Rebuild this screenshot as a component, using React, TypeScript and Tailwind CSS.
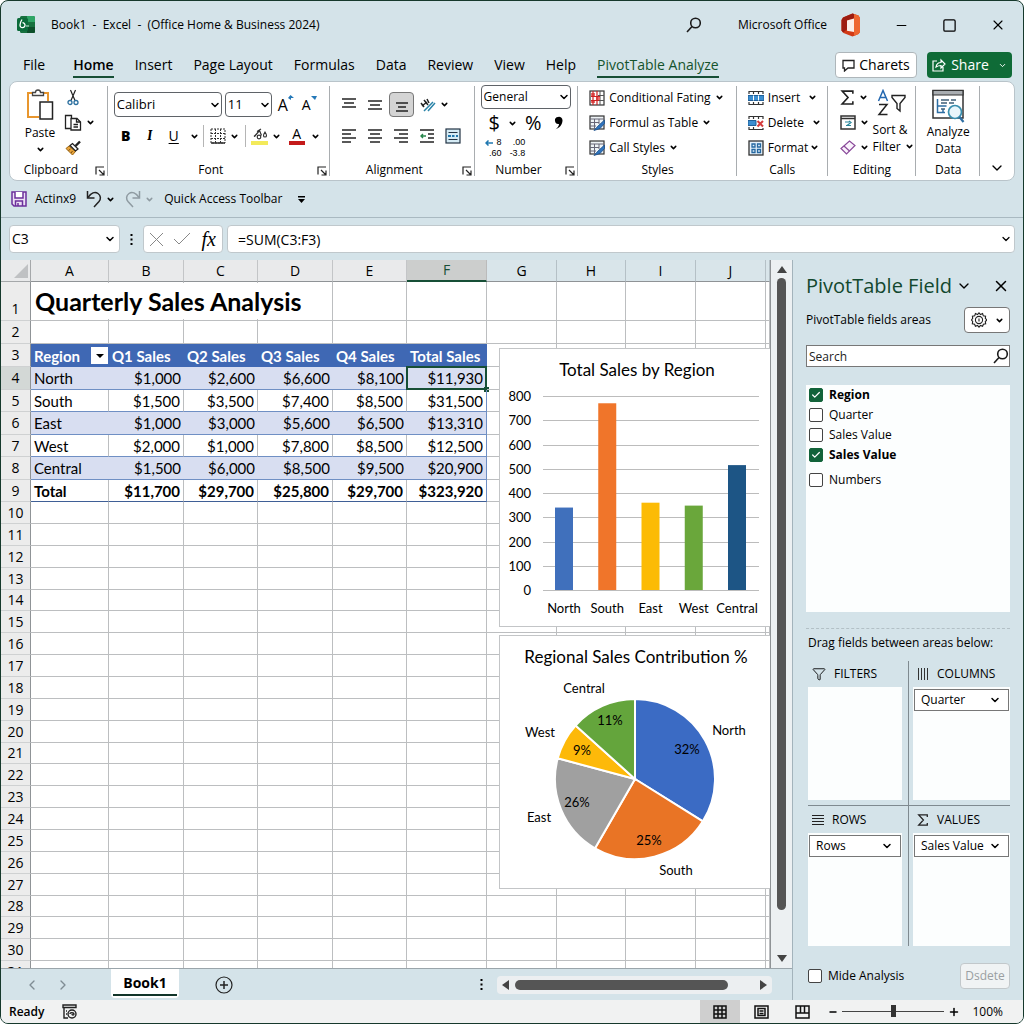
import { useState, type ReactNode } from "react";
import { Check, ChevronDown, ChevronLeft, ChevronRight, Funnel, Minus, Plus, Square, X } from "lucide-react";

const TABS = ["File", "Home", "Insert", "Page Layout", "Formulas", "Data", "Review", "View", "Help", "PivotTable Analyze"];

const COLUMNS = [
  { name: "A", width: "w-[78px]" },
  { name: "B", width: "w-[75px]" },
  { name: "C", width: "w-[74px]" },
  { name: "D", width: "w-[75px]" },
  { name: "E", width: "w-[74px]" },
  { name: "F", width: "w-[80px]" },
  { name: "G", width: "w-[70px]" },
  { name: "H", width: "w-[69px]" },
  { name: "I", width: "w-[70px]" },
  { name: "J", width: "w-[70px]" },
  { name: "", width: "" },
];

const HEADERS = ["Region", "Q1 Sales", "Q2 Sales", "Q3 Sales", "Q4 Sales", "Total Sales"];

const DATA = [
  ["North", "$1,000", "$2,600", "$6,600", "$8,100", "$11,930"],
  ["South", "$1,500", "$3,500", "$7,400", "$8,500", "$31,500"],
  ["East", "$1,000", "$3,000", "$5,600", "$6,500", "$13,310"],
  ["West", "$2,000", "$1,000", "$7,800", "$8,500", "$12,500"],
  ["Central", "$1,500", "$6,000", "$8,500", "$9,500", "$20,900"],
  ["Total", "$11,700", "$29,700", "$25,800", "$29,700", "$323,920"],
];

const ROW_COUNT = 31;

function rowHeight(row: number) {
  if (row === 1) return 39;
  if (row <= 9) return [5, 7, 9].includes(row) ? 22 : 23;
  return row % 7 === 0 ? 21 : 22;
}

const BARS = [
  { label: "North", value: 340, color: "#4070bc" },
  { label: "South", value: 770, color: "#f0752a" },
  { label: "East", value: 360, color: "#fcbb05" },
  { label: "West", value: 348, color: "#6aa73b" },
  { label: "Central", value: 515, color: "#1d5585" },
];

const SLICES = [
  { label: "North", pct: "32%", from: 0, to: 122, color: "#3b6bc4", lx: 229, ly: 99, px: 187, py: 118 },
  { label: "South", pct: "25%", from: 122, to: 210, color: "#e97425", lx: 176, ly: 239, px: 149, py: 209 },
  { label: "East", pct: "26%", from: 210, to: 285, color: "#a0a0a0", lx: 39, ly: 186, px: 77, py: 171 },
  { label: "West", pct: "9%", from: 285, to: 312, color: "#fdb909", lx: 40, ly: 101, px: 82, py: 119 },
  { label: "Central", pct: "11%", from: 312, to: 360, color: "#64a53c", lx: 84, ly: 57, px: 110, py: 89 },
];

const FIELDS = [
  { name: "Region", checked: true, gap: false },
  { name: "Quarter", checked: false, gap: false },
  { name: "Sales Value", checked: false, gap: false },
  { name: "Sales Value", checked: true, gap: false },
  { name: "Numbers", checked: false, gap: true },
];

/* ---------- shared bits ---------- */

function Caret({ className = "" }: { className?: string }) {
  return <ChevronDown className={`size-[9px] shrink-0 ${className}`} strokeWidth={4} />;
}

function Pick({ label, value, className, caret = "right-1" }: { label: string; value: string; className: string; caret?: string }) {
  return (
    <div className="relative">
      <select aria-label={label} className={`block appearance-none border bg-white text-black outline-none ${className}`}>
        <option>{value}</option>
      </select>
      <ChevronDown className={`pointer-events-none absolute top-1/2 size-3 -translate-y-1/2 ${caret}`} strokeWidth={3} />
    </div>
  );
}

function IconButton({ label, className = "", children }: { label: string; className?: string; children: ReactNode }) {
  return (
    <button aria-label={label} className={`flex shrink-0 items-center justify-center ${className}`}>
      {children}
    </button>
  );
}

function Group({ label, launcher = false, children }: { label: string; launcher?: boolean; children: ReactNode }) {
  return (
    <section className="relative flex min-w-0 flex-col">
      <div className="h-[79px] pt-[3px]">{children}</div>
      <div className={`flex h-[18px] items-center justify-center text-xs ${launcher ? "pr-4" : ""}`}>{label}</div>
      {launcher && (
        <button aria-label={`${label} settings`} className="absolute right-[3px] bottom-1">
          <svg width="10" height="10" viewBox="0 0 10 10" fill="none" stroke="#222">
            <path d="M1 8.500V1h8M4 4l4.500 4.500M9 4.500V9H4.500" strokeWidth="1.200" />
          </svg>
        </button>
      )}
      <div className="absolute top-1 right-0 bottom-1 w-px bg-[#a9adb0]" />
    </section>
  );
}

function Lines({ rows }: { rows: number[][] }) {
  return (
    <svg width="16" height="16" viewBox="0 0 16 16" stroke="#222" strokeWidth="1.4">
      {rows.map(([x1, x2, y]) => <path key={y} d={`M${x1} ${y}H${x2}`} />)}
    </svg>
  );
}

/* ---------- icons ---------- */

function ExcelLogo() {
  return (
    <svg width="18" height="18" viewBox="0 0 18 18">
      <rect x="3" y="0" width="15" height="17" rx="1.500" fill="#17713f" />
      <path d="M10 0h6.500A1.500 1.500 0 0 1 18 1.500V6h-8z" fill="#2ea566" />
      <path d="M10 11h8v4.500a1.500 1.500 0 0 1-1.500 1.500H10z" fill="#0c4f2a" />
      <rect x="0" y="2" width="11" height="13" rx="1.500" fill="#0b6b3a" />
      <path d="M5 3.500c-1 1.500-2 3-2 5.500a2.500 2.500 0 1 0 2.500-2.300" fill="none" stroke="#fff" strokeWidth="1.300" />
      <path d="M9 10h3" stroke="#cfeedd" />
    </svg>
  );
}

function OfficeLogo() {
  return (
    <svg width="20" height="24" viewBox="0 0 20 24">
      <path d="M11.500 .5 2 4.500 .5 7v10.500L2.500 20l9 3.500 6-2.500 1.500-2V5l-1.500-2.500z" fill="#d23a16" />
      <path d="M11.500 .5 13 1v4.500L6 7.500v9L2 19.500.5 17.500V7L2 4.500z" fill="#9d1c10" />
      <path d="M13 1l4.500 1.500L19 5v14l-1.500 2-4.500 2z" fill="#ee6630" />
      <path d="M6 7.500 13 5.500v13.500l-7-1.200z" fill="#fbeee9" />
    </svg>
  );
}

function SearchIcon() {
  return (
    <svg width="16" height="16" viewBox="0 0 16 16" fill="none" stroke="#1b1b1b" strokeWidth="1.600">
      <circle cx="9.500" cy="6" r="4.800" />
      <path d="M6 9.500 1 15" />
    </svg>
  );
}

function GearIcon() {
  return (
    <svg width="16" height="16" viewBox="0 0 16 16" fill="none" stroke="#222" strokeWidth="1.100">
      <path d="M8 .8l1.500 1.700 2.100-.9.700 2.200 2.300.3-.3 2.300L16 8l-1.700 1.500.4 2.300-2.300.4-.8 2.100-2.100-.8L8 15.200l-1.500-1.700-2.100.8-.8-2.100-2.300-.4.400-2.300L0.500 8l1.200-1.600-.3-2.300 2.300-.3.700-2.200 2.100.9z" />
      <circle cx="8" cy="8" r="3.600" />
      <path d="M8 6.500v3" />
    </svg>
  );
}

function PasteIcon() {
  return (
    <svg width="28" height="32" viewBox="0 0 28 32" fill="none">
      <path d="M7 4H2v24H13M17 4h5v8" stroke="#e8962e" strokeWidth="2" />
      <path d="M6.500 6.500V3.500h3a2.500 2.500 0 0 1 5 0h3v3z" fill="#fff" stroke="#444" strokeWidth="1.300" />
      <rect x="14" y="13" width="12.500" height="17" fill="#fff" stroke="#222" strokeWidth="1.500" />
    </svg>
  );
}

function CutIcon() {
  return (
    <svg width="14" height="17" viewBox="0 0 14 17" fill="none">
      <path d="M4.500 1l4.500 10.500M9.500 1 5 11.500" stroke="#222" strokeWidth="1.200" />
      <circle cx="4" cy="13.500" r="2" stroke="#2b6f9f" strokeWidth="1.300" />
      <circle cx="10" cy="13.500" r="2" stroke="#2b6f9f" strokeWidth="1.300" />
    </svg>
  );
}

function CopyIcon() {
  return (
    <svg width="18" height="17" viewBox="0 0 18 17" fill="none" stroke="#222" strokeWidth="1.300">
      <path d="M7 14.500H1.500v-13H7.500v3" />
      <path d="M7 4.500h6l3.500 3.500v8H7z" fill="#fff" />
      <path d="M12.500 4.500V8h4M9.500 10.500h4.500M9.500 13h4.500" />
    </svg>
  );
}

function BrushIcon() {
  return (
    <svg width="17" height="16" viewBox="0 0 17 16" fill="none">
      <path d="M4 6 1 8.500l6.500 6.500 3-3.500z" fill="#e8a33a" stroke="#9a6410" />
      <path d="M3.500 10.500l2-1.500M6 13l1.500-2" stroke="#7a4d0c" />
      <path d="M5 5.500 10.500 11l2.500-2L7.500 3.500z" fill="#fff" stroke="#222" strokeWidth="1.300" />
      <path d="M10.500 6l4.500-4.500" stroke="#222" strokeWidth="2.400" />
    </svg>
  );
}

function BordersIcon() {
  return (
    <svg width="16" height="16" viewBox="0 0 16 16" fill="none" stroke="#333">
      <path d="M1 1h14v14H1zM1 5.500h14M1 10.500h14M5.500 1v14M10.500 1v14" strokeDasharray="2 1" />
      <path d="M1 15h14" strokeWidth="1.600" />
    </svg>
  );
}

function FillIcon() {
  return (
    <svg width="17" height="18" viewBox="0 0 17 18" fill="none">
      <path d="M3.500 9.500l5-6 2 5M3 9.500l3-3M6 4.500l4-2.500" stroke="#333" strokeWidth="1.200" />
      <circle cx="8" cy="10" r="1.800" stroke="#333" strokeWidth="1.200" />
      <path d="M14 5c2 3 2 5 0 5s-2-2 0-5z" stroke="#333" strokeWidth="1.100" />
      <rect y="14" width="17" height="4" fill="#f3ea5a" />
    </svg>
  );
}

function OrientIcon() {
  return (
    <svg width="16" height="16" viewBox="0 0 16 16" fill="none">
      <path d="M1 6l3 4M4 3l4 5M2 9l5-4M7 2l2 4" stroke="#222" strokeWidth="1.500" />
      <path d="M4 14l9-9M8 14l7-8" stroke="#2a83a8" strokeWidth="1.500" />
    </svg>
  );
}

function IndentIcon() {
  return (
    <svg width="16" height="16" viewBox="0 0 16 16" fill="none" stroke="#222" strokeWidth="1.400">
      <path d="M1 2h14M9 6h6M9 10h6M1 14h14" />
      <path d="M7 8H2M4 6 2 8l2 2" stroke="#27864b" />
    </svg>
  );
}

function WrapIcon() {
  return (
    <svg width="16" height="16" viewBox="0 0 16 16" fill="none" stroke="#234" strokeWidth="1.200">
      <rect x="1" y="1" width="14" height="14" fill="#d5ebf5" />
      <path d="M3.500 4.500h9M3.500 11.500h9" />
      <path d="M3 8h3M7 8h2.500M11 8h2" stroke="#2178ad" strokeWidth="2" />
    </svg>
  );
}

function ConditionalIcon() {
  return (
    <svg width="16" height="16" viewBox="0 0 16 16" fill="none">
      <rect x="1" y="1" width="14" height="14" fill="#fff" stroke="#333" strokeWidth="1.200" />
      <path d="M9 5.500h6M9 10.500h6M11 1v14" stroke="#555" />
      <path d="M2 3h4v3H2zM7 7h4v3H7zM2 10h4v3H2z" fill="#e86a6a" />
      <path d="M4 1v14M8 1v14M2 6.500h9M2 10.500h8" stroke="#c22" strokeWidth="1.200" />
    </svg>
  );
}

function TableBrushIcon() {
  return (
    <svg width="16" height="16" viewBox="0 0 16 16" fill="none">
      <rect x="1" y="1" width="14" height="13" fill="#eef3f6" stroke="#333" strokeWidth="1.200" />
      <path d="M1 4h14M1 7.500h9M1 11h6M5.500 4v10M10 4v5" stroke="#667" />
      <path d="M15.500 5 9 11l-4 4.500 6-2 4.500-5z" fill="#2f74bd" stroke="#1b4f8a" strokeWidth=".8" />
    </svg>
  );
}

function InsertIcon() {
  return (
    <svg width="16" height="16" viewBox="0 0 16 16" fill="none" stroke="#333">
      <path d="M1 4V1.500h14V4M1 12v2.500h14V12M5.500 1.500V4M10.500 1.500V4M5.500 12v2.500M10.500 12v2.500" strokeWidth="1.200" />
      <path d="M0 5.500h16v5H0z" fill="#3b8ed0" stroke="#1f5f98" />
      <path d="M5.500 5.500v5M10.500 5.500v5" stroke="#fff" />
    </svg>
  );
}

function DeleteIcon() {
  return (
    <svg width="16" height="16" viewBox="0 0 16 16" fill="none" stroke="#333">
      <path d="M1 4V1.500h14V4M1 12v2.500h14V13M5.500 1.500V4M10.500 1.500V4M5.500 12v2.500" strokeWidth="1.200" />
      <path d="M0 5.500h8v5H0z" fill="#3b8ed0" stroke="#1f5f98" />
      <path d="M9.500 6 15 11.500M15 6 9.500 11.500" stroke="#d43c3c" strokeWidth="2" />
    </svg>
  );
}

function FormatIcon() {
  return (
    <svg width="16" height="16" viewBox="0 0 16 16" fill="none">
      <rect x="1" y="1" width="14" height="14" fill="#e5f1fa" stroke="#333" strokeWidth="1.300" />
      <path d="M4 4h3v3H4zM9.500 4h3v3h-3zM4 9.500h3v3H4zM9.500 9.500h3v3h-3z" stroke="#2567a0" strokeWidth="1.300" />
    </svg>
  );
}

function SigmaIcon({ size = 15 }: { size?: number }) {
  return (
    <svg width={size} height={size} viewBox="0 0 14 14" fill="none" stroke="#222" strokeWidth="1.500">
      <path d="M12 3.500V1H2l5.500 6L2 13h10v-2.500" />
    </svg>
  );
}

function FillDownIcon() {
  return (
    <svg width="16" height="15" viewBox="0 0 16 15" fill="none">
      <path d="M1 1h14v13H1zM1 3.500h14" stroke="#333" strokeWidth="1.500" />
      <path d="M5 7h5M6 10.500h5M9 6l2 1.500-4 3" stroke="#27869b" strokeWidth="1.200" />
    </svg>
  );
}

function EraserIcon() {
  return (
    <svg width="16" height="15" viewBox="0 0 16 15" fill="none" stroke="#8a4a9a" strokeWidth="1.200">
      <path d="M1 8.500 9.500 1l5.500 4.500L6.500 14z" fill="#fbf3fd" />
      <path d="M4 6l5.500 5" />
    </svg>
  );
}

function SortIcon() {
  return (
    <svg width="30" height="28" viewBox="0 0 30 28" fill="none">
      <path d="M1.500 12 6 1.500 10.500 12M3 8.500h6" stroke="#2468b0" strokeWidth="1.500" />
      <path d="M2 15.500h8L2 25.500h8.500" stroke="#222" strokeWidth="1.500" />
      <path d="M15 6.500h13v2L23 14.500V22l-3-2.500v-5L15 8.500z" stroke="#222" strokeWidth="1.400" />
    </svg>
  );
}

function AnalyzeIcon() {
  return (
    <svg width="34" height="34" viewBox="0 0 34 34" fill="none">
      <path d="M2 1.500h30V29H2z" fill="#fff" stroke="#333" strokeWidth="1.500" />
      <path d="M2 1.500h30V6H2z" fill="#a9adb1" stroke="#333" strokeWidth="1.200" />
      <path d="M6.500 10v13.500H14M6.500 17h9M12 23v-3" stroke="#2d6ea3" strokeWidth="1.500" />
      <path d="M10 11h8M20 11h5M10 14h6M18 14h5M10 20h4" stroke="#3f5f78" strokeWidth="1.300" />
      <circle cx="24" cy="23" r="6.500" fill="#e9f6fb" stroke="#3a8fae" strokeWidth="1.700" />
      <path d="M28.500 28l4 5" stroke="#2d6ea3" strokeWidth="2.200" />
    </svg>
  );
}

function SaveIcon() {
  return (
    <svg width="16" height="16" viewBox="0 0 16 16" fill="none" stroke="#6b2f9b" strokeWidth="1.500">
      <path d="M1 1h14v14H3l-2-2z" fill="#ecdff5" />
      <path d="M4 1v6h8V1" fill="#fff" />
      <path d="M4.500 15v-5h7v5M7 12v3" />
    </svg>
  );
}

function UndoIcon({ flip = false, color = "#222" }: { flip?: boolean; color?: string }) {
  return (
    <svg width="16" height="18" viewBox="0 0 16 18" fill="none" stroke={color} strokeWidth="1.500" className={flip ? "-scale-x-100" : ""}>
      <path d="M1.500 1v7h7" />
      <path d="M2 7.500C5 3 9 1.500 12 3.500c3 2 3 5.500 1 8L8 17" />
    </svg>
  );
}

/* ---------- ribbon ---------- */

function MenuRow({ icon, text, caret = "ml-1" }: { icon: ReactNode; text: string; caret?: string }) {
  return (
    <button className="flex h-[25px] items-center whitespace-nowrap text-xs">
      <span className="mr-1 shrink-0">{icon}</span>
      {text}
      <Caret className={caret} />
    </button>
  );
}

function Ribbon() {
  return (
    <div className="mx-2 grid h-[100px] shrink-0 grid-cols-[98fr_223fr_145fr_104fr_159fr_91fr_89fr_64fr_34fr] rounded-lg border border-[#b9c4ca] bg-white">
      <Group label="Clipboard" launcher>
        <div className="flex h-full gap-[6px] pl-3">
          <button className="flex w-9 flex-col items-center pt-1 text-xs">
            <PasteIcon />
            <span className="mt-1">Paste</span>
            <Caret className="mt-1" />
          </button>
          <div className="flex flex-col">
            <IconButton label="Cut" className="h-[25px] w-[18px]"><CutIcon /></IconButton>
            <div className="flex items-center gap-1">
              <IconButton label="Copy" className="h-[25px] w-[18px]"><CopyIcon /></IconButton>
              <Caret />
            </div>
            <IconButton label="Format painter" className="h-[25px] w-[18px]"><BrushIcon /></IconButton>
          </div>
        </div>
      </Group>

      <Group label="Font" launcher>
        <div className="flex items-center gap-[3px] pt-[7px] pl-[6px]">
          <Pick label="Font name" value="Calibri" className="h-[25px] w-[108px] rounded border-[#5f6368] pl-[2px] text-[13px]" caret="right-[1px]" />
          <Pick label="Font size" value="11" className="h-[25px] w-[47px] rounded border-[#5f6368] pl-[2px] text-[13px]" caret="right-[1px]" />
          <button aria-label="Grow font" className="ml-[3px] flex text-base leading-5">A<svg width="6" height="6" viewBox="0 0 6 6" fill="#2478b8"><path d="M0 3 2.500 0 6 3H3v2z" /></svg></button>
          <button aria-label="Shrink font" className="ml-[5px] flex text-sm leading-5">A<svg width="6" height="6" viewBox="0 0 6 6" fill="#2478b8"><path d="M0 1h6L4 5z" /></svg></button>
        </div>
        <div className="flex h-[38px] items-center pl-[10px] text-sm">
          <button className="w-4 font-extrabold">B</button>
          <button className="ml-2 w-4 font-serif font-semibold italic">I</button>
          <button className="ml-2 w-4 underline underline-offset-2">U</button>
          <Caret className="ml-2" />
          <span className="mx-1 h-[22px] w-px bg-[#b5b5b5]" />
          <IconButton label="Borders" className="ml-[2px]"><BordersIcon /></IconButton>
          <Caret className="ml-1" />
          <span className="mr-[5px] ml-[6px] h-[22px] w-px bg-[#b5b5b5]" />
          <IconButton label="Fill colour"><FillIcon /></IconButton>
          <Caret className="mr-2 ml-1" />
          <button aria-label="Font colour" className="flex w-4 flex-col items-center border-b-4 border-[#c41a1a] text-sm leading-[14px]">A</button>
          <Caret className="ml-[6px]" />
        </div>
      </Group>

      <Group label="Alignment" launcher>
        <div className="flex h-8 items-center gap-[10px] pt-[7px] pl-[11px]">
          <IconButton label="Top align"><Lines rows={[[1, 15, 2], [3, 13, 6], [1, 15, 10]]} /></IconButton>
          <IconButton label="Middle align"><Lines rows={[[1, 15, 4], [3, 13, 8], [1, 15, 12]]} /></IconButton>
          <IconButton label="Bottom align" className="-mx-1 size-[25px] rounded border border-[#777] bg-[#d4d4d4]"><Lines rows={[[2, 14, 6], [4, 12, 10], [2, 14, 14]]} /></IconButton>
          <IconButton label="Orientation" className="gap-1"><OrientIcon /><Caret /></IconButton>
        </div>
        <div className="flex h-[38px] items-center gap-[10px] pl-[11px]">
          <IconButton label="Align left"><Lines rows={[[1, 15, 2], [1, 10, 6], [1, 15, 10], [1, 10, 14]]} /></IconButton>
          <IconButton label="Centre"><Lines rows={[[1, 15, 2], [3, 13, 6], [1, 15, 10], [3, 13, 14]]} /></IconButton>
          <IconButton label="Align right"><Lines rows={[[1, 15, 2], [6, 15, 6], [1, 15, 10], [6, 15, 14]]} /></IconButton>
          <IconButton label="Decrease indent"><IndentIcon /></IconButton>
          <IconButton label="Wrap text"><WrapIcon /></IconButton>
        </div>
      </Group>

      <Group label="Number" launcher>
        <div className="pr-[7px] pl-[6px]">
          <Pick label="Number format" value="General" className="h-6 w-full rounded border-[#5f6368] pl-[2px] text-xs" caret="right-[1px]" />
          <div className="flex h-7 items-center pl-2 text-xl leading-7">
            <button>$</button>
            <Caret className="mr-2 ml-2" />
            <button>%</button>
            <button aria-label="Comma style" className="ml-3">
              <svg width="9" height="14" viewBox="0 0 9 14"><path d="M4 1a3.500 3.500 0 0 1 4.500 3.500C8.500 9 5 12 1.500 13.500 4 11.500 5 9.500 5 8A3.500 3.500 0 1 1 4 1z" /></svg>
            </button>
          </div>
          <div className="flex gap-2 pl-1 font-['Liberation_Sans',sans-serif] text-[9px] leading-[11px]">
            <button className="flex flex-col items-end">
              <span className="flex items-center gap-1">
                <svg width="8" height="6" fill="none" stroke="#2078b0" strokeWidth="1.500"><path d="M8 3H1M3.500 .5 1 3l2.500 2.500" /></svg>
                8
              </span>
              <span>.60</span>
            </button>
            <button className="flex flex-col items-end">
              <span>.00</span>
              <span>-3.8</span>
            </button>
          </div>
        </div>
      </Group>

      <Group label="Styles">
        <div className="flex flex-col items-start pl-[11px]">
          <MenuRow icon={<ConditionalIcon />} text="Conditional Fating" />
          <MenuRow icon={<TableBrushIcon />} text="Formul as Table" />
          <MenuRow icon={<TableBrushIcon />} text="Call Styles" />
        </div>
      </Group>

      <Group label="Calls">
        <div className="flex flex-col items-start pl-[11px]">
          <MenuRow icon={<InsertIcon />} text="Insert" caret="ml-2" />
          <MenuRow icon={<DeleteIcon />} text="Delete" caret="ml-2" />
          <MenuRow icon={<FormatIcon />} text="Format" caret="ml-[2px]" />
        </div>
      </Group>

      <Group label="Editing">
        <div className="flex gap-1 pl-3">
          <div className="flex flex-col">
            {[
              { label: "Sum", icon: <SigmaIcon /> },
              { label: "Fill", icon: <FillDownIcon /> },
              { label: "Clear", icon: <EraserIcon /> },
            ].map((b) => (
              <IconButton key={b.label} label={b.label} className="h-[25px] gap-1">{b.icon}<Caret /></IconButton>
            ))}
          </div>
          <button className="flex flex-col items-start pt-1 text-xs leading-[17px] whitespace-nowrap">
            <span className="ml-1"><SortIcon /></span>
            <span className="mt-1">Sort &amp;</span>
            <span className="flex items-center gap-1">Filter <Caret /></span>
          </button>
        </div>
      </Group>

      <Group label="Data">
        <button className="flex w-full flex-col items-center pt-1 text-xs leading-[17px]">
          <AnalyzeIcon />
          <span>Analyze</span>
          <span>Data</span>
        </button>
      </Group>

      <div className="flex items-end justify-center pb-1">
        <IconButton label="Collapse ribbon"><ChevronDown className="size-4" /></IconButton>
      </div>
    </div>
  );
}

/* ---------- sheet ---------- */

function BarChart() {
  const y = (v: number) => 241 - v * 0.2425;
  return (
    <svg width="271" height="277" className="block" fontSize="13" fill="#000">
      <text x="137" y="27" fontSize="17" textAnchor="middle">Total Sales by Region</text>
      {[800, 700, 600, 500, 400, 300, 200, 100, 0].map((v) => (
        <g key={v}>
          <path d={`M43 ${Math.round(y(v)) + 0.5}H259`} stroke="#bcbcbc" />
          <text x="31" y={y(v) + 5} textAnchor="end">{v}</text>
        </g>
      ))}
      {BARS.map((b, i) => (
        <g key={b.label}>
          <rect x={55 + i * 43.25} y={y(b.value)} width="18" height={241 - y(b.value)} fill={b.color} />
          <text x={64 + i * 43.25} y="264" textAnchor="middle">{b.label}</text>
        </g>
      ))}
    </svg>
  );
}

function PieChart() {
  const point = (deg: number) => {
    const a = (deg * Math.PI) / 180;
    return `${135 + 80 * Math.sin(a)} ${143 - 80 * Math.cos(a)}`;
  };
  return (
    <svg width="271" height="252" className="block" fontSize="13" fill="#000" textAnchor="middle">
      <text x="136" y="27" fontSize="17">Regional Sales Contribution %</text>
      {SLICES.map((s) => (
        <path key={s.label} d={`M135 143L${point(s.from)}A80 80 0 0 1 ${point(s.to)}Z`} fill={s.color} stroke="#fff" strokeWidth="2" />
      ))}
      {SLICES.map((s) => (
        <g key={s.label}>
          <text x={s.lx} y={s.ly}>{s.label}</text>
          <text x={s.px} y={s.py}>{s.pct}</text>
        </g>
      ))}
    </svg>
  );
}

function cellClass(row: number, col: number) {
  if (row < 3 || row > 9 || col > 5) return "border-r border-b border-[#bcbec0]";
  if (row === 3) return "bg-[#3f68b4] font-bold text-white";
  const align = col === 0 ? "text-left" : "text-right";
  const band = row % 2 === 0 ? "bg-[#d8def1]" : "";
  const edge = col === 5 ? "border-r border-r-[#6f8fc4]" : band ? "" : "border-r border-r-[#bcbec0]";
  const bottom = row === 9 ? "border-b border-b-[#3f5f96] font-bold" : "border-b border-b-[#6f8fc4]";
  return `${align} ${band} ${edge} ${bottom}`;
}

function Cell({ row, col }: { row: number; col: number }) {
  const selected = row === 4 && col === 5;
  return (
    <td className={`relative overflow-visible whitespace-nowrap p-0 px-[3px] ${cellClass(row, col)}`}>
      {row === 1 && col === 0 && <span className="relative z-10 block w-[298px] bg-white pl-px text-[25px] leading-9 font-bold">Quarterly Sales Analysis</span>}
      {row === 3 && HEADERS[col]}
      {row === 3 && col === 0 && (
        <button aria-label="Filter region" className="absolute top-[3px] right-[1px] flex size-[17px] items-center justify-center bg-white">
          <svg width="8" height="4" viewBox="0 0 8 4"><path d="M0 0h8L4 4z" /></svg>
        </button>
      )}
      {row >= 4 && row <= 9 && DATA[row - 4][col]}
      {selected && (
        <span className="pointer-events-none absolute -inset-px border-2 border-[#174f36]">
          <span className="absolute -right-1 -bottom-1 size-[5px] bg-[#174f36]" />
        </span>
      )}
    </td>
  );
}

function Sheet() {
  return (
    <div className="relative min-w-0 flex-1 overflow-hidden border-r border-[#8f9396] bg-white font-[Lato,sans-serif]">
      <table className="w-full table-fixed border-separate border-spacing-0 text-[15px] leading-5">
        <colgroup>
          <col className="w-[30px]" />
          {COLUMNS.map((c, i) => <col key={i} className={c.width} />)}
        </colgroup>
        <thead className="font-['Open_Sans',sans-serif] text-sm">
          <tr className="h-[22px]">
            <th className="border-r border-b border-[#a5a8aa] bg-[#e9eaeb] p-0">
              <svg width="17" height="16" className="ml-auto"><path d="M15 1v14H1z" fill="#bfc1c3" /></svg>
            </th>
            {COLUMNS.map((c, i) => (
              <th
                key={i}
                className={`border-r border-b p-0 font-normal ${
                  i === 5 ? "border-b-2 border-r-[#bbb] border-b-[#174f36] bg-[#cccecd] text-[#174f36]" : i < 5 ? "border-r-[#c3c5c7] border-b-[#8f9396] bg-[#e9eaeb]" : "border-r-[#b5c0c6] border-b-[#8f9396] bg-[#d9e5ea]"
                }`}
              >
                {c.name}
              </th>
            ))}
          </tr>
        </thead>
        <tbody>
          {Array.from({ length: ROW_COUNT }, (_, i) => i + 1).map((row) => (
            <tr key={row} style={{ height: rowHeight(row) }}>
              <th
                className={`border-r border-b border-r-[#8f9396] border-b-[#cfd1d2] p-0 font-['Open_Sans',sans-serif] text-sm font-normal ${
                  row === 4 ? "bg-[#d3d8d6]" : "bg-[#ececec]"
                } ${row === 1 ? "pb-px align-bottom" : "align-middle"}`}
              >
                {row}
              </th>
              {COLUMNS.map((_, col) => <Cell key={col} row={row} col={col} />)}
            </tr>
          ))}
        </tbody>
      </table>
      <figure className="absolute top-[88px] left-[498px] z-10 border border-[#c3c5c7] bg-white"><BarChart /></figure>
      <figure className="absolute top-[375px] left-[498px] z-10 border border-[#c3c5c7] bg-white"><PieChart /></figure>
    </div>
  );
}

function VerticalScroll() {
  return (
    <div className="flex w-[21px] shrink-0 flex-col items-center gap-[5px] bg-[#ecf0f2] py-[6px]">
      <IconButton label="Scroll up"><svg width="10" height="7"><path d="M5 0l5 7H0z" fill="#444" /></svg></IconButton>
      <div className="w-[9px] flex-1">
        <div className="h-[94%] rounded-full bg-[#555]" />
      </div>
      <IconButton label="Scroll down"><svg width="10" height="7"><path d="M5 7l5-7H0z" fill="#444" /></svg></IconButton>
    </div>
  );
}

function SheetTabs() {
  return (
    <div className="flex h-8 shrink-0 items-center border-t border-[#9aa5ab] pr-5">
      <IconButton label="Previous sheet" className="ml-[23px] text-[#7f8c94]"><ChevronLeft className="size-4" /></IconButton>
      <IconButton label="Next sheet" className="ml-[15px] text-[#7f8c94]"><ChevronRight className="size-4" /></IconButton>
      <button className="ml-10 flex h-[29px] w-[68px] justify-center self-start rounded-b bg-white px-[2px] pb-[2px] text-sm font-bold">
        <span className="w-full border-b-2 border-[#12352a] pt-1 leading-5">Book1</span>
      </button>
      <IconButton label="New sheet" className="ml-9">
        <svg width="18" height="18" viewBox="0 0 18 18" fill="none" stroke="#222" strokeWidth="1.200"><circle cx="9" cy="9" r="8" /><path d="M9 5v8M5 9h8" strokeWidth="1.500" /></svg>
      </IconButton>
      <div className="flex-1" />
      <svg width="3" height="13" viewBox="0 0 3 13" className="mr-[14px]"><path d="M.5 1h2v2h-2zM.5 5.500h2v2h-2zM.5 10h2v2h-2z" /></svg>
      <div className="flex h-[18px] w-[275px] items-center gap-[6px] rounded bg-[#eceff1] px-[5px]">
        <IconButton label="Scroll left"><svg width="7" height="10"><path d="M0 5l7-5v10z" fill="#444" /></svg></IconButton>
        <div className="flex-1"><div className="h-[10px] w-[89%] rounded-full bg-[#555]" /></div>
        <IconButton label="Scroll right"><svg width="7" height="10"><path d="M7 5 0 0v10z" fill="#444" /></svg></IconButton>
      </div>
    </div>
  );
}

/* ---------- field pane ---------- */

function Tick({ label, checked, onChange, className = "" }: { label: string; checked: boolean; onChange: () => void; className?: string }) {
  return (
    <label className={`flex h-5 items-center gap-[6px] text-xs ${checked ? "font-bold" : "font-medium"} ${className}`}>
      <span className="relative size-[14px]">
        <input type="checkbox" checked={checked} onChange={onChange} className="block size-[14px] appearance-none rounded-[2px] border border-[#444] bg-white checked:border-[#12633a] checked:bg-[#12633a]" />
        {checked && <Check className="pointer-events-none absolute top-[2px] left-[2px] size-[10px] text-white" strokeWidth={3} />}
      </span>
      {label}
    </label>
  );
}

function Area({ icon, title, value }: { icon: ReactNode; title: string; value?: string }) {
  return (
    <div className="flex flex-col">
      <div className="flex h-[26px] items-center gap-2 pl-1 text-xs font-medium">
        {icon}
        {title}
      </div>
      <div className="h-[113px] bg-[#fcfefe] px-px pt-[2px]">
        {value && <Pick label={title} value={value} className="h-[22px] w-full border-[#777] pl-[6px] text-xs font-medium" caret="right-2" />}
      </div>
    </div>
  );
}

function FieldPane() {
  const [fields, setFields] = useState(FIELDS);
  const [hidden, setHidden] = useState(false);

  function toggle(i: number) {
    setFields(fields.map((f, n) => (n === i ? { ...f, checked: !f.checked } : f)));
  }

  return (
    <aside className="flex w-[231px] shrink-0 flex-col border-l border-[#a3b3bb] pr-[13px] pl-[13px] text-xs">
      <div className="flex h-12 items-center pt-[3px]">
        <h2 className="text-xl text-[#12482e]">PivotTable Field</h2>
        <ChevronDown className="ml-1 size-4" />
        <IconButton label="Close pane" className="ml-auto"><X className="size-[18px]" /></IconButton>
      </div>
      <div className="flex h-6 items-center justify-between font-medium">
        PivotTable fields areas
        <button aria-label="Pane options" className="flex h-[26px] w-[46px] items-center justify-center gap-2 rounded-sm border border-[#777] bg-white">
          <GearIcon />
          <Caret />
        </button>
      </div>
      <div className="relative mt-[13px]">
        <input aria-label="Search fields" placeholder="Search" className="block h-[22px] w-full border border-[#777] bg-white pl-[2px] text-xs placeholder:text-[#222]" />
        <span className="pointer-events-none absolute top-[3px] right-[1px]"><SearchIcon /></span>
      </div>
      <div className="mt-[18px] h-[227px] bg-[#fcfefe] pl-[3px]">
        {fields.map((f, i) => <Tick key={i} label={f.name} checked={f.checked} onChange={() => toggle(i)} className={f.gap ? "mt-[5px]" : ""} />)}
      </div>
      <div className="mt-4 border-t border-dashed border-[#b3c0c6]" />
      <div className="mt-1 pl-[2px] leading-5 font-medium">Drag fields between areas below:</div>
      <div className="mt-2 ml-[2px] grid grid-cols-2">
        <div className="border-r border-b border-[#7f8a90] pr-[6px] pb-[5px]">
          <Area icon={<Funnel className="size-[14px]" strokeWidth={1.500} />} title="FILTERS" />
        </div>
        <div className="border-b border-[#7f8a90] pb-[5px] pl-1">
          <Area icon={<svg width="12" height="12" stroke="#333" fill="none"><path d="M1.500 0v12M4.500 0v12M7.500 0v12M10.500 0v12" /></svg>} title="COLUMNS" value="Quarter" />
        </div>
        <div className="border-r border-[#7f8a90] pt-px pr-[6px]">
          <Area icon={<svg width="12" height="12" stroke="#222" fill="none"><path d="M0 1.500h12M0 4.500h12M0 7.500h12M0 10.500h12" /></svg>} title="ROWS" value="Rows" />
        </div>
        <div className="pt-px pl-1">
          <Area icon={<SigmaIcon size={12} />} title="VALUES" value="Sales Value" />
        </div>
      </div>
      <div className="mt-auto flex items-center justify-between pb-[11px] pl-[2px]">
        <Tick label="Mide Analysis" checked={hidden} onChange={() => setHidden(!hidden)} />
        <button className="h-[26px] w-[50px] rounded-sm border border-[#c2c8cb] bg-[#f0f3f4] text-[#9a9fa2]">Dsdete</button>
      </div>
    </aside>
  );
}

/* ---------- window ---------- */

export default function App() {
  const [zoom, setZoom] = useState(50);

  return (
    <div className="flex h-screen flex-col overflow-hidden rounded-lg border border-[#16392c] bg-[#d4e3e9] font-['Open_Sans',sans-serif] text-black">
      <header className="flex h-12 shrink-0 items-center pl-4 text-xs">
        <ExcelLogo />
        <h1 className="ml-4 font-medium whitespace-pre">Book1  -  Excel  -  (Office Home &amp; Business 2024)</h1>
        <div className="flex-1" />
        <IconButton label="Search"><SearchIcon /></IconButton>
        <span className="ml-9 font-medium">Microsoft Office</span>
        <span className="ml-[14px]"><OfficeLogo /></span>
        <IconButton label="Minimize" className="ml-[33px]"><Minus className="size-[15px]" strokeWidth={1.700} /></IconButton>
        <IconButton label="Maximize" className="ml-[33px]"><Square className="size-[15px]" strokeWidth={2} /></IconButton>
        <IconButton label="Close" className="mr-[17px] ml-[33px]"><X className="size-4" strokeWidth={1.700} /></IconButton>
      </header>

      <nav className="flex h-8 shrink-0 items-center pr-[11px] pl-[22px] text-sm">
        <div className="flex gap-[21px]">
          {TABS.map((tab) => (
            <button
              key={tab}
              className={`h-[26px] border-b-2 pt-px whitespace-nowrap ${
                tab === "Home" ? "ml-[7px] border-[#174f36] font-semibold" : tab === "PivotTable Analyze" ? "border-[#174f36] text-[#14532d]" : "border-transparent"
              }`}
            >
              {tab}
            </button>
          ))}
        </div>
        <div className="flex-1" />
        <button className="flex h-[26px] w-[82px] items-center justify-center gap-1 rounded border border-[#aeb6ba] bg-white">
          <svg width="13" height="13" viewBox="0 0 13 13" fill="none" stroke="#222" strokeWidth="1.300"><path d="M1 1.500h11v7.500H6L2.500 12V9H1z" /></svg>
          Charets
        </button>
        <button className="ml-[10px] flex h-[26px] w-[85px] items-center justify-center gap-[5px] rounded bg-[#0f6b37] text-white">
          <svg width="14" height="14" viewBox="0 0 14 14" fill="none" stroke="#fff" strokeWidth="1.200"><path d="M5 3H1v10h10V9M4 9c.5-3 2.500-4.500 5-4.500V2l4 4-4 4V7.500C7 7.500 5.500 8 4 9z" /></svg>
          Share
          <ChevronDown className="ml-1 size-[9px]" strokeWidth={2.500} />
        </button>
      </nav>

      <Ribbon />

      <div className="flex h-[37px] shrink-0 items-center border-b border-[#a9b9c1] pl-[10px] text-xs font-medium">
        <IconButton label="Save"><SaveIcon /></IconButton>
        <span className="ml-2">Actinx9</span>
        <IconButton label="Undo" className="ml-[10px] gap-1"><UndoIcon /><Caret /></IconButton>
        <IconButton label="Redo" className="ml-[10px] gap-1 text-[#8f9ba2]"><UndoIcon flip color="#8f9ba2" /><Caret /></IconButton>
        <span className="ml-[10px]">Quick Access Toolbar</span>
        <IconButton label="Customize toolbar" className="ml-4"><svg width="7" height="8"><path d="M0 1h7v1.500H0zM0 4h7L3.500 8z" /></svg></IconButton>
      </div>

      <div className="flex h-[42px] shrink-0 items-center pr-2 pl-2 text-sm">
        <Pick label="Name box" value="C3" className="h-7 w-[111px] rounded border-[#c0c8cc] pl-[2px]" caret="right-1" />
        <svg width="3" height="13" viewBox="0 0 3 13" className="mx-[10px]"><path d="M.5 1h2v2h-2zM.5 5.500h2v2h-2zM.5 10h2v2h-2z" /></svg>
        <div className="flex h-7 w-20 items-center justify-between rounded border border-[#c0c8cc] bg-white px-[6px]">
          <IconButton label="Cancel" className="text-[#888]"><svg width="13" height="13" stroke="currentColor"><path d="M0 0l13 13M13 0 0 13" /></svg></IconButton>
          <IconButton label="Enter" className="text-[#888]"><svg width="16" height="12" stroke="currentColor" fill="none"><path d="M0 6l5 5L16 0" /></svg></IconButton>
          <button className="font-['Liberation_Serif',serif] text-xl leading-6 italic">fx</button>
        </div>
        <div className="relative ml-1 flex-1">
          <input aria-label="Formula" defaultValue="=SUM(C3:F3)" className="block h-7 w-full rounded border border-[#c0c8cc] bg-white pl-[10px]" />
          <ChevronDown className="pointer-events-none absolute top-2 right-[3px] size-3" strokeWidth={2.500} />
        </div>
      </div>

      <main className="flex min-h-0 flex-1">
        <div className="flex min-w-0 flex-1 flex-col">
          <div className="flex min-h-0 flex-1">
            <Sheet />
            <VerticalScroll />
          </div>
          <SheetTabs />
        </div>
        <FieldPane />
      </main>

      <footer className="flex h-[23px] shrink-0 items-center bg-[#f1f2f2] pr-5 pl-2 text-xs font-medium">
        <span className="font-semibold">Ready</span>
        <svg width="15" height="15" viewBox="0 0 15 15" fill="none" stroke="#222" strokeWidth="1.400" className="ml-[18px]"><path d="M1 3.500V1h13v2.500zM2 3.500V14h4M4 7h1M4 10h1" /><circle cx="10" cy="10" r="4" /><path d="M8 10c0-2 4-1.500 4 0s-2 1.500-2 0" /></svg>
        <div className="flex-1" />
        <IconButton label="Normal view" className="h-full w-10 bg-[#cfcfcf]"><svg width="14" height="14" fill="none" stroke="#111" strokeWidth="1.500"><path d="M1 1h12v12H1zM5 1v12M9 1v12M1 5h12M1 9h12" /></svg></IconButton>
        <IconButton label="Page layout view" className="ml-[14px]"><svg width="15" height="14" fill="none" stroke="#111" strokeWidth="1.500"><path d="M1 1h13v12H1zM4 3.500h7v7H4zM5.500 6h4M5.500 8.500h4" /></svg></IconButton>
        <IconButton label="Page break view" className="ml-[26px]"><svg width="15" height="14" fill="none" stroke="#111" strokeWidth="1.500"><path d="M1 1h13v12H1zM1 8h13M5.500 1v7M9.500 1v7" /></svg></IconButton>
        <IconButton label="Zoom out" className="ml-[18px]"><Minus className="size-[10px]" strokeWidth={4} /></IconButton>
        <input
          type="range"
          aria-label="Zoom"
          value={zoom}
          onChange={(e) => setZoom(Number(e.target.value))}
          className="mx-1 h-3 w-[102px] appearance-none bg-transparent [&::-webkit-slider-runnable-track]:h-px [&::-webkit-slider-runnable-track]:bg-[#444] [&::-webkit-slider-thumb]:-mt-[6px] [&::-webkit-slider-thumb]:h-3 [&::-webkit-slider-thumb]:w-[5px] [&::-webkit-slider-thumb]:appearance-none [&::-webkit-slider-thumb]:bg-[#333]"
        />
        <IconButton label="Zoom in"><Plus className="size-3" strokeWidth={3} /></IconButton>
        <span className="ml-3">100%</span>
      </footer>
    </div>
  );
}
